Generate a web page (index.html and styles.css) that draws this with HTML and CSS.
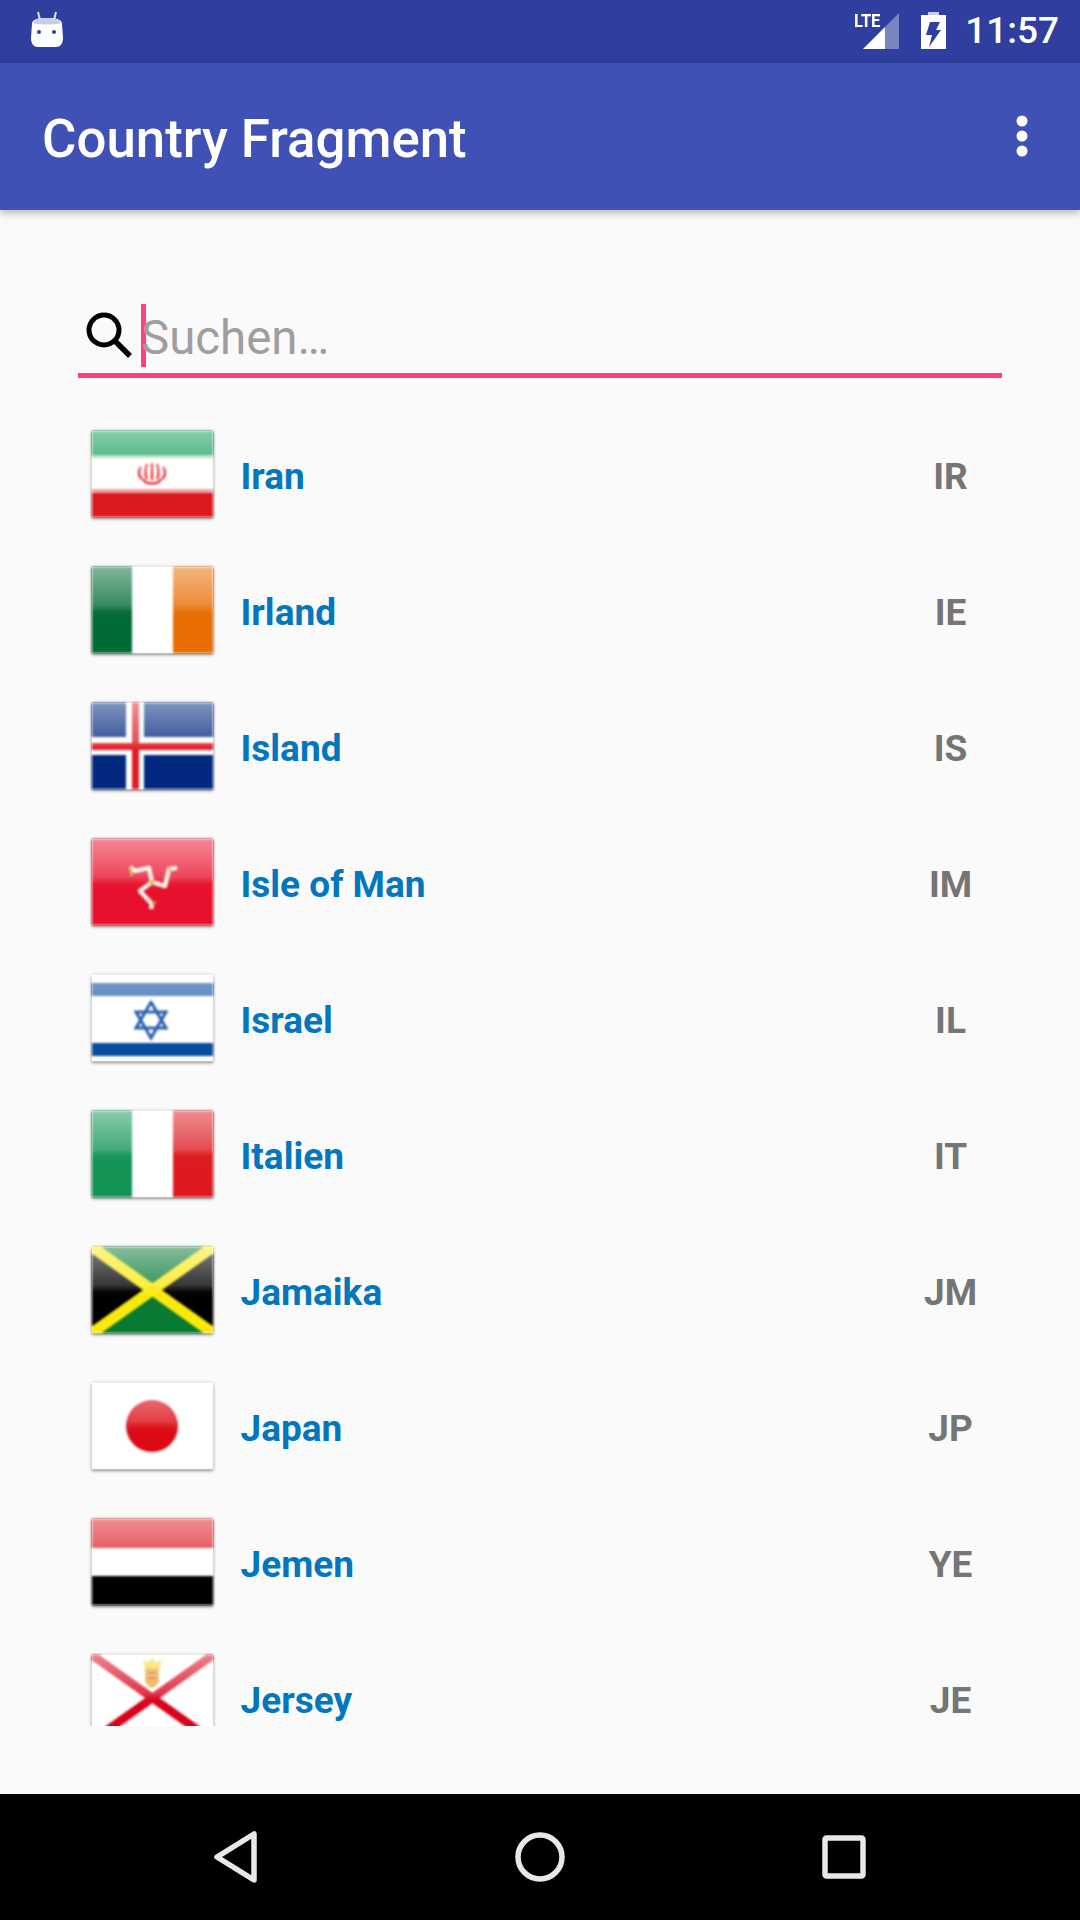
FILE: index.html
```html
<!DOCTYPE html>
<html lang="de">
<head>
<meta charset="utf-8">
<title>Country Fragment</title>
<link rel="stylesheet" href="styles.css">
</head>
<body>
<div class="screen">
  <header class="statusbar">
    <svg class="robot" width="40" height="40" viewBox="0 0 40 40">
      <path d="M9 1l2 8M27 1l-2 8" stroke="#dfe2f0" stroke-width="2" fill="none"/>
      <path d="M3 13c0-5 6-6 15-6s15 1 15 6l1 14c0 6-3 9-7 9H9c-4 0-7-3-7-9z" fill="#fff"/>
      <path d="M4 12c1-4 7-5 14-5s13 1 14 5c-4 2-24 2-28 0z" fill="#c9cee6"/>
      <circle cx="10" cy="21" r="2" fill="#303f9f"/><circle cx="25" cy="21" r="2" fill="#303f9f"/>
    </svg>
    <div class="status-right">
      <span class="lte">LTE</span>
      <svg class="signal" width="36" height="36" viewBox="0 0 36 36">
        <path d="M22 14L36 0v36H22z" fill="#7985c0"/>
        <path d="M0 36L22 14v22z" fill="#fff"/>
      </svg>
      <svg class="battery" width="25" height="37" viewBox="0 0 25 37">
        <path d="M7 0h11v3H7z" fill="#c9cee6"/>
        <path d="M0 3h25v34H0z" fill="#fff"/>
        <path d="M9 10h10l-4 8h5L8 35l3-12H5z" fill="#303f9f"/>
      </svg>
      <span class="clock">11:57</span>
    </div>
  </header>

  <div class="appbar">
    <h1 class="title">Country Fragment</h1>
    <svg class="overflow" width="12" height="42" viewBox="0 0 12 42">
      <circle cx="6" cy="6" r="5.5" fill="#fff"/><circle cx="6" cy="21" r="5.5" fill="#fff"/><circle cx="6" cy="36" r="5.5" fill="#fff"/>
    </svg>
  </div>

  <main class="content">
    <div class="search">
      <svg class="search-icon" width="46" height="46" viewBox="0 0 46 46">
        <circle cx="18" cy="18" r="15" fill="none" stroke="#000" stroke-width="5"/>
        <path d="M29 29l15 15" stroke="#000" stroke-width="5.5" fill="none"/>
      </svg>
      <span class="caret"></span>
      <span class="placeholder">Suchen…</span>
    </div>

    <ul class="list">
      <li class="row">
        <div class="flag"><svg viewBox="0 0 121 86">
          <rect width="121" height="86" fill="#fff"/>
          <rect width="121" height="24" fill="#0f9a52"/>
          <rect y="24" width="121" height="3" fill="#9fd8ae"/>
          <rect y="62" width="121" height="24" fill="#da1a20"/>
          <rect y="58" width="121" height="4" fill="#f0a0a2"/>
          <g fill="none" stroke="#e23a40" stroke-width="2.6">
            <path d="M60 32v17M55 33c-2 6-2 11 0 15M65 33c2 6 2 11 0 15M49 36c-3 4-3 8 1 12M71 36c3 4 3 8-1 12M51 48c3 6 15 6 18 0"/>
          </g>
        </svg></div>
        <span class="name">Iran</span><span class="code">IR</span>
      </li>
      <li class="row">
        <div class="flag"><svg viewBox="0 0 121 86">
          <rect width="121" height="86" fill="#fff"/>
          <rect width="40" height="86" fill="#006b35"/>
          <rect x="81" width="40" height="86" fill="#e86c00"/>
        </svg></div>
        <span class="name">Irland</span><span class="code">IE</span>
      </li>
      <li class="row">
        <div class="flag"><svg viewBox="0 0 121 86">
          <rect width="121" height="86" fill="#02287f"/>
          <path d="M34 0h18v34h69v18H52v34H34V52H0V34h34z" fill="#fff"/>
          <path d="M40 0h7v40h74v7H47v39h-7V47H0v-7h40z" fill="#e01f26"/>
        </svg></div>
        <span class="name">Island</span><span class="code">IS</span>
      </li>
      <li class="row">
        <div class="flag"><svg viewBox="0 0 121 86">
          <rect width="121" height="86" fill="#e8112d"/>
          <g fill="none" stroke="#f6efe6" stroke-width="4.6" stroke-linejoin="round">
            <path d="M60 43L57 29 43 32 38 28M60 43l13 4 4-17 8-1M60 43l-12 9 12 13-1 5"/>
          </g>
          <path d="M38 28l2 9M77 28l1 4M60 65l4-2" stroke="#d2a32c" stroke-width="2.5"/>
          <circle cx="60" cy="43" r="2.5" fill="#d2c04c"/>
        </svg></div>
        <span class="name">Isle of Man</span><span class="code">IM</span>
      </li>
      <li class="row">
        <div class="flag flag-flat"><svg viewBox="0 0 121 86">
          <rect width="121" height="86" fill="#fff"/>
          <rect y="8" width="121" height="13" fill="#0a4da0"/>
          <rect y="68" width="121" height="13" fill="#0a4da0"/>
          <g fill="none" stroke="#2a62ae" stroke-width="3">
            <path d="M59 27l15 26H44zM59 63L44 37h30z"/>
          </g>
        </svg></div>
        <span class="name">Israel</span><span class="code">IL</span>
      </li>
      <li class="row">
        <div class="flag"><svg viewBox="0 0 121 86">
          <rect width="121" height="86" fill="#fff"/>
          <rect width="40" height="86" fill="#129455"/>
          <rect x="81" width="40" height="86" fill="#dc1a20"/>
        </svg></div>
        <span class="name">Italien</span><span class="code">IT</span>
      </li>
      <li class="row">
        <div class="flag"><svg viewBox="0 0 121 86">
          <rect width="121" height="86" fill="#000"/>
          <path d="M0 0h121L60 43zM0 86h121L60 43z" fill="#087a32"/>
          <path d="M0 0l121 86M121 0L0 86" stroke="#fbe90d" stroke-width="11" fill="none"/>
        </svg></div>
        <span class="name">Jamaika</span><span class="code">JM</span>
      </li>
      <li class="row">
        <div class="flag"><svg viewBox="0 0 121 86">
          <rect width="121" height="86" fill="#fff"/>
          <circle cx="60" cy="43" r="26" fill="#dc0a14"/>
        </svg></div>
        <span class="name">Japan</span><span class="code">JP</span>
      </li>
      <li class="row">
        <div class="flag"><svg viewBox="0 0 121 86">
          <rect width="121" height="86" fill="#fff"/>
          <rect width="121" height="29" fill="#dc2028"/>
          <rect y="57" width="121" height="29" fill="#000"/>
        </svg></div>
        <span class="name">Jemen</span><span class="code">YE</span>
      </li>
      <li class="row">
        <div class="flag"><svg viewBox="0 0 121 86">
          <rect width="121" height="86" fill="#fff"/>
          <path d="M0 0l121 86M121 0L0 86" stroke="#d9001b" stroke-width="8.5" fill="none"/>
          <path d="M51 4l4 4 5-5 5 5 5-4-2 9H53z" fill="#f6d72e"/>
          <path d="M53 13h14v14c-2 3-5 5-7 6-2-1-5-3-7-6z" fill="#e8a22c"/>
          <path d="M56 18h8M56 23h8" stroke="#cf5a1a" stroke-width="2"/>
        </svg></div>
        <span class="name">Jersey</span><span class="code">JE</span>
      </li>
    </ul>
  </main>

  <nav class="navbar">
    <svg class="nav-back" width="44" height="52" viewBox="0 0 44 52">
      <path d="M40 3v46L3 26z" fill="none" stroke="#e8e8e8" stroke-width="5.5" stroke-linejoin="round"/>
    </svg>
    <svg class="nav-home" width="50" height="50" viewBox="0 0 50 50">
      <circle cx="25" cy="25" r="22" fill="none" stroke="#e8e8e8" stroke-width="5.5"/>
    </svg>
    <svg class="nav-recent" width="44" height="44" viewBox="0 0 44 44">
      <rect x="3" y="3" width="38" height="38" rx="1.5" fill="none" stroke="#e8e8e8" stroke-width="5.5"/>
    </svg>
  </nav>
</div>
</body>
</html>
```
FILE: styles.css
```css
* { box-sizing: border-box; }
html, body { margin: 0; padding: 0; }
body { font-family: Roboto, "Noto Sans", sans-serif; background: #fafafa; }

.screen {
  width: 1080px;
  height: 1920px;
  display: flex;
  flex-direction: column;
  overflow: hidden;
  background: #fafafa;
}

.statusbar {
  height: 63px;
  flex: none;
  background: #303f9f;
  color: #fff;
  display: flex;
  align-items: flex-start;
  justify-content: space-between;
  padding: 11px 21px 0 29px;
}
.robot { display: block; }
.status-right { display: flex; align-items: flex-start; position: relative; }
.lte {
  position: absolute;
  left: -9px;
  top: 0;
  font-size: 18.5px;
  line-height: 21px;
  font-weight: 700;
  letter-spacing: -0.3px;
  transform: scaleX(.9);
  transform-origin: left top;
}
.signal { display: block; margin-top: 2px; }
.battery { display: block; margin-left: 22px; margin-top: 1px; }
.clock {
  margin-left: 19px;
  font-size: 37px;
  line-height: 40px;
  font-weight: 500;
}

.appbar {
  height: 147px;
  flex: none;
  background: #3f51b5;
  color: #fff;
  display: flex;
  align-items: center;
  justify-content: space-between;
  padding: 0 52px 0 42px;
  box-shadow: 0 3px 8px rgba(0, 0, 0, .28);
  position: relative;
}
.title { margin: 5px 0 0; font-size: 52.8px; line-height: 60px; font-weight: 500; }
.overflow { display: block; margin-top: -2px; }

.content {
  flex: 1;
  min-height: 0;
  padding: 94px 78px 68px;
  display: flex;
  flex-direction: column;
}

.search {
  height: 74px;
  flex: none;
  display: flex;
  align-items: flex-start;
  border-bottom: 5px solid #ff4081;
  padding-left: 8px;
}
.search-icon { display: block; margin-top: 8px; }
.caret { width: 5px; height: 63px; background: #ff4081; margin-left: 9px; flex: none; }
.placeholder {
  font-size: 47.4px;
  line-height: 63px;
  margin-left: -5px;
  color: #9e9e9e;
  margin-top: 3px;
}

.list {
  list-style: none;
  margin: 28px 0 0;
  padding: 0;
  flex: 1;
  min-height: 0;
  overflow: hidden;
}
.row {
  height: 136px;
  display: flex;
  align-items: center;
  padding-left: 14px;
}
.flag {
  width: 121px;
  height: 86px;
  flex: none;
  position: relative;
  box-shadow: 0 2px 3px rgba(0, 0, 0, .38), 0 0 4px rgba(0, 0, 0, .2);
}
.flag svg { display: block; width: 121px; height: 86px; filter: blur(.8px); }
.flag::after {
  content: "";
  position: absolute;
  inset: 0;
  background: linear-gradient(to bottom,
    rgba(255, 255, 255, .5) 0,
    rgba(255, 255, 255, .22) 44%,
    rgba(255, 255, 255, .03) 52%,
    rgba(255, 255, 255, 0) 60%);
}
.flag-flat::after { background: linear-gradient(to bottom, rgba(255, 255, 255, .42) 0, rgba(255, 255, 255, .36) 30%, rgba(255, 255, 255, 0) 32%); }

.name {
  flex: 1;
  margin: 5px 0 0 27.5px;
  font-size: 37px;
  line-height: 44px;
  font-weight: 700;
  color: #0277bd;
}
.code {
  width: 100px;
  flex: none;
  margin: 5px 1.5px 0 0;
  text-align: center;
  font-size: 37px;
  line-height: 44px;
  font-weight: 700;
  color: #757575;
}

.navbar {
  height: 126px;
  flex: none;
  background: #000;
  display: flex;
  position: relative;
}
.nav-back { position: absolute; left: 214px; top: 37px; }
.nav-home { position: absolute; left: 515px; top: 38px; }
.nav-recent { position: absolute; left: 822px; top: 41px; }
```
